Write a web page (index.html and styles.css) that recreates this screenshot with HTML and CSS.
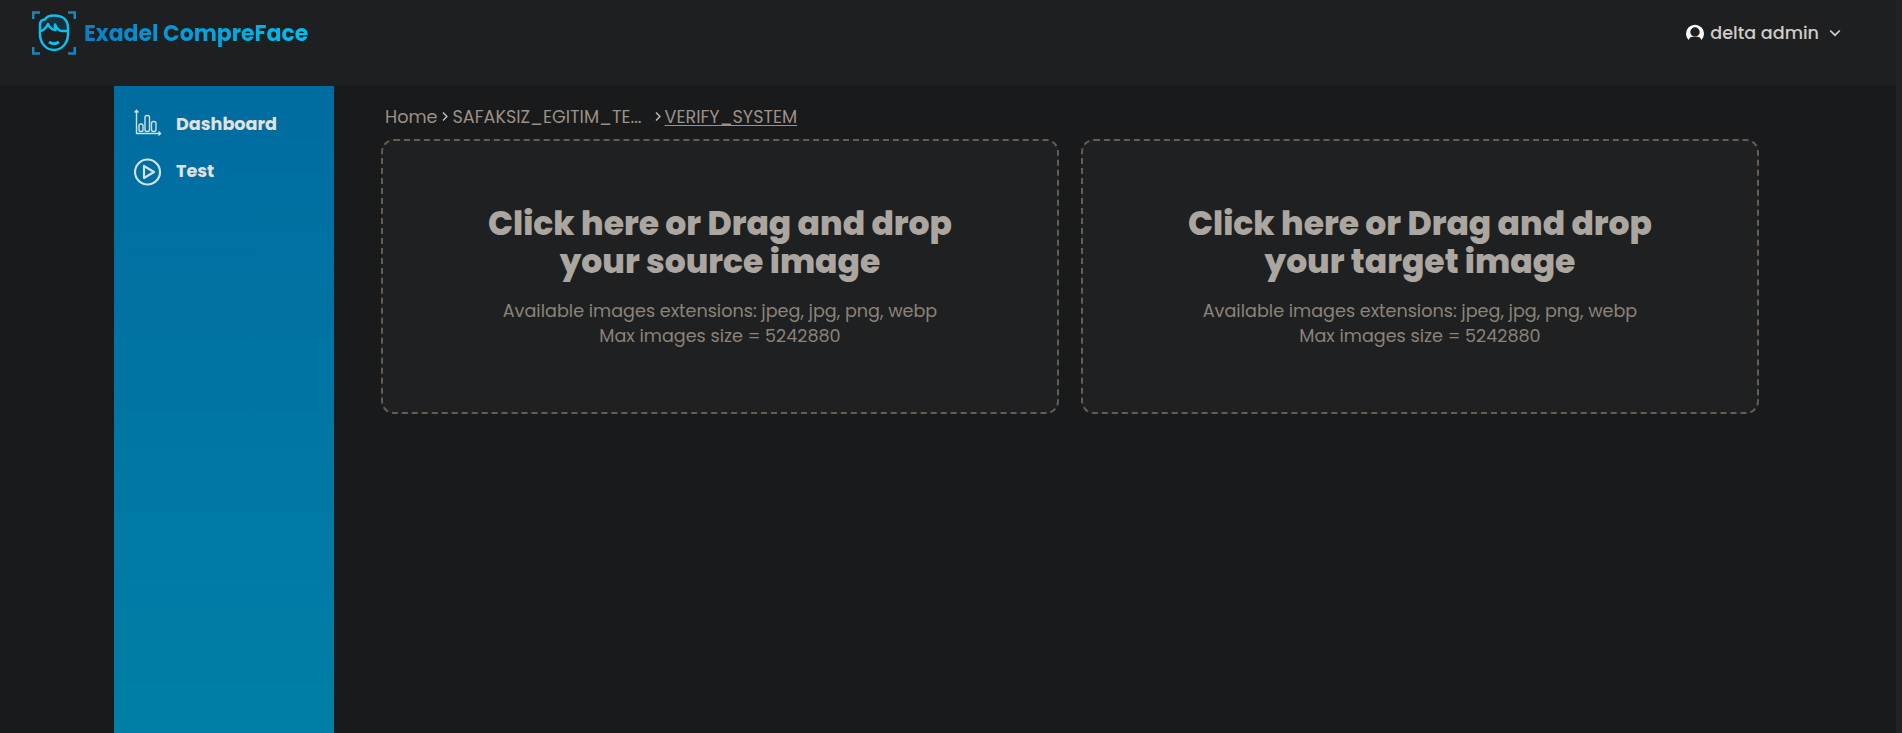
FILE: index.html
```html
<!DOCTYPE html>
<html lang="en">
<head>
<meta charset="utf-8">
<title>Exadel CompreFace</title>
<link rel="stylesheet" href="styles.css">
</head>
<body>
<div class="page">
  <header class="header">
    <a class="brand">
      <svg class="logo" viewBox="0 0 44 44" width="44" height="44" fill="none">
        <path d="M1.200 8V1.500H8M36 1.500H42.800V8M42.800 36V42.500H36M8 42.500H1.200V36" stroke="#1b84bd" stroke-width="2.600"/>
        <path d="M8 20V14C8 10 10 8 13 8C14 5 18 4 22 4C31 4 36 9 36 17V20H26L23 14L25 18L20 17L16 13C14 18 12 20 8 20Z" fill="#17303a"/>
        <path d="M8 20V14C8 10 10 8.500 13 8.500C14 6 18 4.500 22 4.500C31 4.500 36 9 36 17V23C36 33 29 39 22 39C15 39 8 33 8 23V20C12 20 14 17 16 13C18 17 20 19 23.500 19C22.500 17 23 15 23 13.500C25 18 27 20 30 20H36" stroke="#09c1f0" stroke-width="2.500" stroke-linejoin="round"/>
        <path d="M17 31Q22 34.500 27 31" stroke="#09c1f0" stroke-width="2.800"/>
      </svg>
      <span class="brand-name">Exadel CompreFace</span>
    </a>
    <div class="user">
      <svg class="avatar" viewBox="0 0 18 18" width="18" height="18">
        <path fill="#fff" fill-rule="evenodd" d="M2.500 16A9 9 0 1 1 15.500 16L14 13.500Q9 11.500 4 13.500ZM9 3.300A4.700 4.700 0 1 0 9 12.700A4.700 4.700 0 1 0 9 3.300Z"/>
      </svg>
      <span class="user-name">delta admin</span>
      <svg class="caret" viewBox="0 0 12 8" width="12" height="8" fill="none"><path d="M1.200 1.500L6 6.200L10.800 1.500" stroke="#cfccc8" stroke-width="1.700"/></svg>
    </div>
  </header>
  <div class="body">
    <nav class="sidebar">
      <a class="nav-item">
        <svg class="nav-icon chart" viewBox="0 0 28 28" width="28" height="28" fill="none" stroke="#cfe0e6" stroke-width="1.400">
          <path d="M2.500 1.500V24.500H26M.5 3.500L2.500 1.300L4.500 3.500M24.500 22.500L26.500 24.500L24.500 26.500"/>
          <rect x="5" y="15" width="4" height="7.500" rx="1.800"/><rect x="11" y="6.500" width="4.500" height="16" rx="2"/><rect x="17.500" y="12.500" width="4.500" height="10" rx="2"/>
        </svg>
        <span>Dashboard</span>
      </a>
      <a class="nav-item">
        <svg class="nav-icon play" viewBox="0 0 28 28" width="28" height="28" fill="none" stroke="#d6e1e5" stroke-width="2.200">
          <circle cx="13.500" cy="14" r="12.500"/><path d="M10 8V20L20 14Z" stroke-linejoin="round"/>
        </svg>
        <span>Test</span>
      </a>
    </nav>
    <main class="content">
      <div class="crumbs">
        <span>Home</span>
        <svg class="sep" viewBox="0 0 6 9" width="6" height="9" fill="none"><path d="M1 .5L4.900 4.500L1 8.500" stroke="#c4bfb8" stroke-width="1.400"/></svg>
        <span>SAFAKSIZ_EGITIM_TE...</span>
        <svg class="sep last" viewBox="0 0 6 9" width="6" height="9" fill="none"><path d="M1 .5L4.900 4.500L1 8.500" stroke="#c4bfb8" stroke-width="1.400"/></svg>
        <span class="current">VERIFY_SYSTEM</span>
      </div>
      <div class="drops">
        <section class="drop">
          <h1>Click here or Drag and drop<br>your source image</h1>
          <p>Available images extensions: jpeg, jpg, png, webp<br>Max images size = 5242880</p>
        </section>
        <section class="drop">
          <h1>Click here or Drag and drop<br>your target image</h1>
          <p>Available images extensions: jpeg, jpg, png, webp<br>Max images size = 5242880</p>
        </section>
      </div>
    </main>
  </div>
</div>
<div class="scrollbar"></div>
</body>
</html>
```
FILE: styles.css
```css
* { box-sizing: border-box; }
body { margin: 0; height: 733px; display: flex; overflow: hidden; background: #191a1c; font-family: Poppins, Inter, sans-serif; }
.page { flex: 1; display: flex; flex-direction: column; }
.scrollbar { width: 6px; background: #202224; }
.header { height: 86px; padding: 11px 55px 0 32px; display: flex; justify-content: space-between; align-items: flex-start; background: #1e1f21; }
.brand { display: flex; gap: 8px; }
.brand-name { font-size: 21.9px; line-height: 46px; font-weight: 700; color: transparent; background: linear-gradient(90deg, #0b7ec4, #00c0f0); background-clip: text; -webkit-background-clip: text; }
.user { display: flex; align-items: center; height: 44px; color: #cfccc8; }
.user-name { font-size: 17.6px; line-height: 26px; font-weight: 500; margin: 0 10px 0 6px; }
.body { flex: 1; display: flex; padding-left: 114px; }
.sidebar { width: 220px; padding: 24px 20px; display: flex; flex-direction: column; gap: 19px; background: linear-gradient(#006ca0, #007fa6); }
.nav-item { height: 28px; display: flex; align-items: center; gap: 14px; color: #e3e1de; font-size: 17.6px; line-height: 26px; font-weight: 700; }
.chart { margin-bottom: 2px; }
.play { margin-top: 2px; }
.content { flex: 1; padding: 18px 137px 0 47px; }
.crumbs { height: 35px; padding: 0 0 9px 4px; display: flex; align-items: center; color: #9c9184; font-size: 17.6px; line-height: 26px; }
.sep { margin: 0 4px 1px 5px; }
.sep.last { margin-left: 13px; }
.current { text-decoration: underline; text-decoration-thickness: 1px; text-underline-offset: 2px; }
.drops { display: flex; gap: 22px; }
.drop { flex: 1; height: 275px; display: flex; flex-direction: column; justify-content: center; align-items: center; text-align: center; border: 2px dashed #655d53; border-radius: 13px; background: #1f2022; }
h1 { margin: 0 0 18px; font-size: 33px; line-height: 38px; font-weight: 800; color: #aba69f; }
p { margin: 0; font-size: 17.6px; line-height: 25px; color: #8c8378; }
```
